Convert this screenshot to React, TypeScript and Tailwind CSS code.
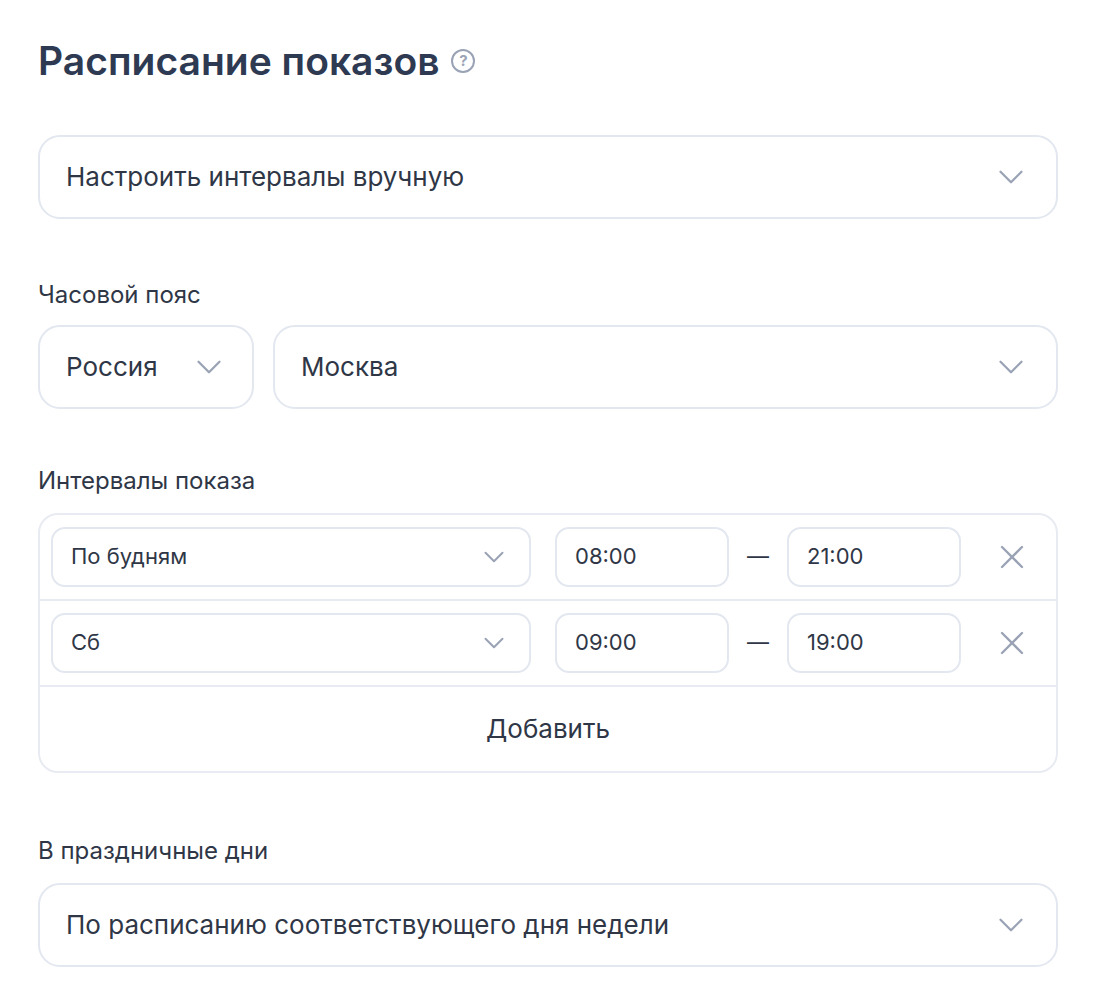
import { ChevronDown, X } from 'lucide-react'

function Select({ text, className = '' }: { text: string; className?: string }) {
  return (
    <div className={`flex h-[84px] items-center justify-between rounded-[22px] border-2 border-[#e3e7ef] pl-[26px] pr-[24px] ${className}`}>
      <span className="text-[26px] text-[#2f3747]">{text}</span>
      <ChevronDown className="h-[42px] w-[42px] text-[#9aa3b5]" strokeWidth={1.3} />
    </div>
  )
}

function IntervalRow({ day, from, to }: { day: string; from: string; to: string }) {
  return (
    <div className="flex h-[86px] items-center border-b-2 border-[#e8ebf1] pl-[11px] pr-[24px]">
      <div className="flex h-[60px] w-[480px] items-center justify-between rounded-[14px] border-2 border-[#e3e7ef] pl-[18px] pr-[18px]">
        <span className="text-[22px] text-[#2f3747]">{day}</span>
        <ChevronDown className="h-[34px] w-[34px] text-[#9aa3b5]" strokeWidth={1.4} />
      </div>
      <div className="ml-[24px] flex h-[60px] w-[174px] items-center rounded-[14px] border-2 border-[#e3e7ef] pl-[18px] text-[22px] text-[#2f3747]">{from}</div>
      <span className="w-[58px] text-center text-[22px] text-[#2f3747]">—</span>
      <div className="flex h-[60px] w-[174px] items-center rounded-[14px] border-2 border-[#e3e7ef] pl-[18px] text-[22px] text-[#2f3747]">{to}</div>
      <X className="ml-auto h-[40px] w-[40px] text-[#9aa3b5]" strokeWidth={1.4} />
    </div>
  )
}

export default function App() {
  return (
    <div className="min-h-screen bg-white px-[38px] pt-[32px] text-[#2f3747]" style={{ fontFamily: 'Inter, "Noto Sans", sans-serif' }}>
      <div className="flex items-center gap-[12px]">
        <h1 className="text-[39px] font-semibold text-[#2e3a52]">Расписание показов</h1>
        <span className="flex h-[24px] w-[24px] items-center justify-center rounded-full border-2 border-[#9aa3b5] text-[15px] font-bold text-[#9aa3b5]">?</span>
      </div>

      <Select text="Настроить интервалы вручную" className="mt-[44px]" />

      <div className="mt-[58px] text-[24px]">Часовой пояс</div>
      <div className="mt-[12px] flex gap-[19px]">
        <Select text="Россия" className="w-[216px] !pr-[22px]" />
        <Select text="Москва" className="flex-1" />
      </div>

      <div className="mt-[54px] text-[24px]">Интервалы показа</div>
      <div className="mt-[14px] overflow-hidden rounded-[20px] border-2 border-[#e8ebf1]">
        <IntervalRow day="По будням" from="08:00" to="21:00" />
        <IntervalRow day="Сб" from="09:00" to="19:00" />
        <div className="flex h-[84px] items-center justify-center text-[26px] text-[#2f3747]">Добавить</div>
      </div>

      <div className="mt-[60px] text-[24px]">В праздничные дни</div>
      <Select text="По расписанию соответствующего дня недели" className="mt-[14px]" />
    </div>
  )
}
